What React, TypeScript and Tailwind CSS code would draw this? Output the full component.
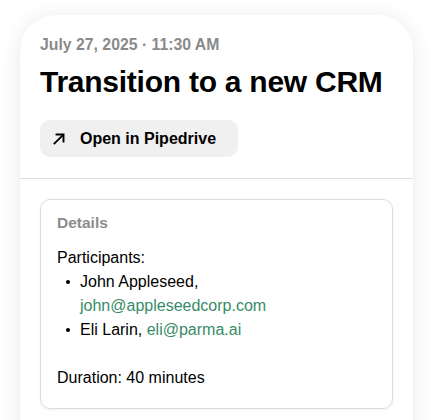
export default function App() {
    return (
        <div className="h-[420px] overflow-hidden bg-white px-[20px] pt-[15px] font-['Liberation_Sans',Arial,sans-serif]">
            <div className="min-h-[440px] rounded-t-[36px] bg-white shadow-[0_2px_22px_rgba(0,0,0,0.09)]">
                <MeetingHeader />
                <div className="h-px bg-[#dddddd]" />
                <div className="px-[20px] pt-5 pb-8">
                    <DetailsCard />
                </div>
            </div>
        </div>
    )
}

function MeetingHeader() {
    return (
        <div className="px-[20px] pt-5 pb-[21px]">
            <div className="text-[15.8px] leading-[20px] font-bold text-[#8a8a8a]">
                July 27, 2025 · 11:30 AM
            </div>
            <h1 className="mt-[9px] text-[30px] leading-[36px] font-bold tracking-[-0.25px] text-black">
                Transition to a new CRM
            </h1>
            <button className="mt-5 flex h-[37px] items-center gap-[15px] rounded-[10px] bg-[#f0f0f0] pl-[13px] pr-[22px] text-[16px] font-bold text-black">
                <ArrowIcon />
                Open in Pipedrive
            </button>
        </div>
    )
}

function ArrowIcon() {
    return (
        <svg width="12" height="12" viewBox="0 0 12 12" fill="none" stroke="black" strokeWidth="1.9" strokeLinecap="square">
            <path d="M1.5 10.5 L10 2" />
            <path d="M3.5 1.5 H10.5 V8.5" />
        </svg>
    )
}

function DetailsCard() {
    return (
        <div className="rounded-[10px] border border-[#dcdcdc] px-4 pt-3 pb-[18px] shadow-[0_1px_3px_rgba(0,0,0,0.06)]">
            <div className="text-[15.5px] leading-[22px] font-bold text-[#8c8c8c]">Details</div>
            <div className="mt-3 text-[16px] leading-[24px] text-black">
                <div>Participants:</div>
                <Participant name="John Appleseed," email="john@appleseedcorp.com" />
                <Participant name="Eli Larin," email="eli@parma.ai" />
                <div className="h-[24px]" />
                <div>Duration: 40 minutes</div>
            </div>
        </div>
    )
}

function Participant({ name, email }: { name: string; email: string }) {
    return (
        <div className="flex">
            <div className="w-[23px] shrink-0 pt-[10px] pl-[9px]">
                <div className="h-[3.5px] w-[3.5px] rounded-full bg-black" />
            </div>
            <div className="flex-1">
                {name} <span className="text-[#378b68]">{email}</span>
            </div>
        </div>
    )
}
